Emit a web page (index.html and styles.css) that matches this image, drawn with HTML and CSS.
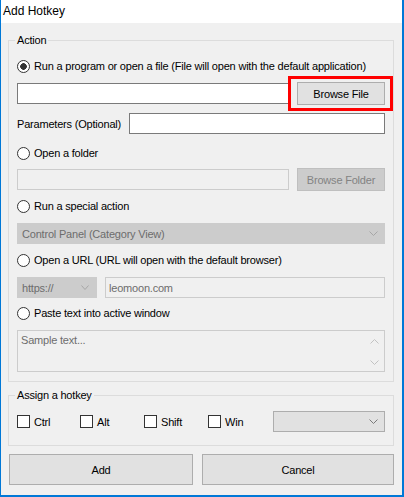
FILE: index.html
```html
<!DOCTYPE html>
<html>
<head>
<meta charset="utf-8">
<title>Add Hotkey</title>
<link rel="stylesheet" href="styles.css">
</head>
<body>
<div class="window">
  <div class="titlebar">Add Hotkey</div>
  <div class="client">
    <fieldset class="group group-action">
      <legend>Action</legend>
      <div class="opt opt-first"><span class="radio checked"></span><span>Run a program or open a file (File will open with the default application)</span></div>
      <div class="row row-file">
        <div class="field field-file"></div>
        <div class="btn-wrap">
          <div class="btn btn-browse">Browse File</div>
          <span class="highlight"></span>
        </div>
      </div>
      <div class="row row-params">
        <span class="label-params">Parameters (Optional)</span>
        <div class="field field-params"></div>
      </div>
      <div class="opt opt-folder"><span class="radio"></span><span>Open a folder</span></div>
      <div class="row row-folder">
        <div class="field field-disabled field-folder"></div>
        <div class="btn btn-disabled btn-browse">Browse Folder</div>
      </div>
      <div class="opt opt-special"><span class="radio"></span><span>Run a special action</span></div>
      <div class="row row-special">
        <div class="combo combo-disabled combo-special">
          <span>Control Panel (Category View)</span>
          <svg class="chev" width="9" height="5" viewBox="0 0 9 5"><polyline points="0.5,0.5 4.5,4.5 8.5,0.5" fill="none" stroke="#a6a6a6" stroke-width="1"/></svg>
        </div>
      </div>
      <div class="opt opt-url"><span class="radio"></span><span>Open a URL (URL will open with the default browser)</span></div>
      <div class="row row-url">
        <div class="combo combo-disabled combo-proto">
          <span>https://</span>
          <svg class="chev" width="8" height="5" viewBox="0 0 8 5"><polyline points="0.5,0.5 4,4.5 7.5,0.5" fill="none" stroke="#a6a6a6" stroke-width="1"/></svg>
        </div>
        <div class="field field-disabled field-url"><span>leomoon.com</span></div>
      </div>
      <div class="opt opt-paste"><span class="radio"></span><span>Paste text into active window</span></div>
      <div class="textarea">
        <span class="placeholder">Sample text...</span>
        <div class="scroll">
          <svg width="9" height="5" viewBox="0 0 9 5"><polyline points="0.5,4.5 4.5,0.5 8.5,4.5" fill="none" stroke="#c2c2c2" stroke-width="1"/></svg>
          <svg width="9" height="5" viewBox="0 0 9 5"><polyline points="0.5,0.5 4.5,4.5 8.5,0.5" fill="none" stroke="#c2c2c2" stroke-width="1"/></svg>
        </div>
      </div>
    </fieldset>

    <fieldset class="group group-hotkey">
      <legend>Assign a hotkey</legend>
      <div class="row row-hotkey">
        <div class="check-item"><span class="checkbox"></span><span>Ctrl</span></div>
        <div class="check-item"><span class="checkbox"></span><span>Alt</span></div>
        <div class="check-item"><span class="checkbox"></span><span>Shift</span></div>
        <div class="check-item"><span class="checkbox"></span><span>Win</span></div>
        <div class="combo combo-key">
          <span></span>
          <svg class="chev" width="9" height="5" viewBox="0 0 9 5"><polyline points="0.5,0.5 4.5,4.5 8.5,0.5" fill="none" stroke="#7a7a7a" stroke-width="1"/></svg>
        </div>
      </div>
    </fieldset>

    <div class="actions">
      <div class="btn btn-big">Add</div>
      <div class="btn btn-big">Cancel</div>
    </div>
  </div>
</div>
</body>
</html>
```

FILE: styles.css
```css
* {
  box-sizing: border-box;
}

html,
body {
  margin: 0;
  padding: 0;
}

body {
  width: 404px;
  height: 497px;
  overflow: hidden;
  background: #ffffff;
  color: #000000;
  font-family: "Liberation Sans", Arial, sans-serif;
  font-size: 11px;
  letter-spacing: -0.2px;
}

.window {
  height: 497px;
  display: flex;
  flex-direction: column;
  background: #f0f0f0;
  border-left: 1px solid #0078d7;
  border-right: 2px solid #0078d7;
  border-bottom: 2px solid #0078d7;
}

.titlebar {
  height: 23px;
  flex: none;
  background: #ffffff;
  padding-left: 2px;
  font-size: 12px;
  letter-spacing: 0;
  line-height: 23px;
}

.client {
  padding: 0 8px 0 7px;
}

.group {
  margin: 0;
  padding: 0 8px 9px 8px;
  border: 1px solid #dcdcdc;
  min-width: 0;
}

.group legend {
  margin-left: -2px;
  padding: 0 2px;
  height: 14px;
  line-height: 14px;
}

.group-action {
  margin-top: 10px;
}

.group-hotkey {
  margin-top: 6px;
  padding-bottom: 12px;
}

.opt {
  display: flex;
  align-items: center;
  height: 16px;
  gap: 4px;
  white-space: nowrap;
}

.opt-first { margin-top: 11px; }
.opt-folder { margin-top: 10px; }
.opt-special { margin-top: 7px; }
.opt-url { margin-top: 7px; }
.opt-paste { margin-top: 6px; }

.radio {
  flex: none;
  width: 13px;
  height: 13px;
  border: 1px solid #333333;
  border-radius: 50%;
  background: #ffffff;
}

.radio.checked {
  background: radial-gradient(circle at center, #333333 0, #333333 3px, #ffffff 3.6px);
}

.row {
  display: flex;
  align-items: center;
  height: 23px;
}

.row-file { margin-top: 8px; }
.row-params { margin-top: 7px; }
.row-folder { margin-top: 7px; }
.row-special { margin-top: 8px; }
.row-url { margin-top: 8px; gap: 8px; }

.row-file,
.row-folder {
  gap: 8px;
}

.field {
  height: 21px;
  background: #ffffff;
  border: 1px solid #7a7a7a;
  display: flex;
  align-items: center;
  padding-left: 3px;
}

.field-file,
.field-folder {
  flex: 1;
}

.field-params {
  flex: 1;
}

.field-disabled {
  background: #f0f0f0;
  border-color: #cccccc;
  color: #6d6d6d;
}

.field-url {
  flex: 1;
}

.label-params {
  width: 112px;
  flex: none;
  white-space: nowrap;
}

.btn-wrap {
  position: relative;
  flex: none;
  width: 88px;
  height: 23px;
}

.btn {
  display: flex;
  align-items: center;
  justify-content: center;
  background: #e1e1e1;
  border: 1px solid #adadad;
  white-space: nowrap;
}

.btn-browse {
  width: 88px;
  height: 23px;
  flex: none;
}

.btn-disabled {
  background: #cccccc;
  border-color: #bfbfbf;
  color: #838383;
}

.highlight {
  position: absolute;
  top: -6px;
  bottom: -6px;
  left: -9px;
  right: -8px;
  border: 3px solid #ff0000;
  pointer-events: none;
}

.combo {
  height: 21px;
  display: flex;
  align-items: center;
  justify-content: space-between;
  padding: 0 6px 0 4px;
  white-space: nowrap;
}

.combo-disabled {
  background: #cccccc;
  border: 1px solid #cccccc;
  color: #6d6d6d;
}

.combo-special {
  flex: 1;
}

.combo-proto {
  width: 80px;
  flex: none;
  padding-right: 7px;
}

.combo-key {
  background: #e1e1e1;
  border: 1px solid #adadad;
}

.chev {
  display: block;
  flex: none;
}

.textarea {
  margin-top: 9px;
  height: 42px;
  background: #f0f0f0;
  border: 1px solid #cccccc;
  display: flex;
  justify-content: space-between;
  padding: 2px 0 0 3px;
}

.placeholder {
  color: #6d6d6d;
  line-height: 14px;
}

.scroll {
  width: 17px;
  display: flex;
  flex-direction: column;
  justify-content: space-between;
  align-items: center;
  padding: 6px 2px 6px 0;
}

.scroll svg {
  display: block;
}

.row-hotkey {
  margin-top: 8px;
  display: grid;
  grid-template-columns: 63px 64px 64px 65px 1fr;
  align-items: center;
}

.check-item {
  display: flex;
  align-items: center;
  gap: 4px;
  white-space: nowrap;
}

.checkbox {
  flex: none;
  width: 13px;
  height: 13px;
  border: 1px solid #333333;
  background: #ffffff;
}

.actions {
  margin-top: 8px;
  margin-left: 1px;
  display: grid;
  grid-template-columns: 184px 1fr;
  gap: 9px;
}

.btn-big {
  height: 31px;
}
```
